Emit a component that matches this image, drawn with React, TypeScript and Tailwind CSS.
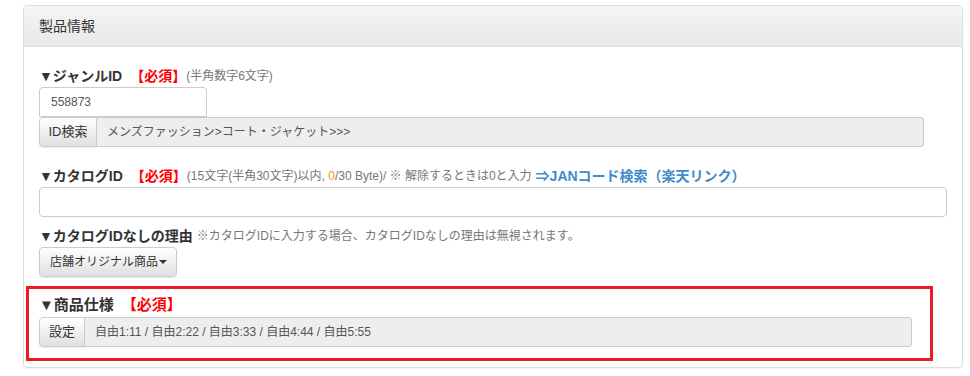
import React from "react";

const font = "font-['Liberation_Sans','Noto_Sans_CJK_JP',sans-serif]";

const Required = () => (
  <span className="text-[#ff0000] font-bold ml-[8px]">【必須】</span>
);

const AddonGroup = ({
  addon,
  value,
  width,
  addonWidth,
}: {
  addon: string;
  value: string;
  width: string;
  addonWidth: string;
}) => (
  <div className={`flex h-[30px] ${width}`}>
    <div
      className={`flex items-center justify-center ${addonWidth} border border-[#ccc] rounded-l-[4px] bg-gradient-to-b from-white to-[#e0e0e0] text-[13px] text-[#333] shadow-[0_1px_1px_rgba(0,0,0,0.08)] whitespace-nowrap`}
    >
      {addon}
    </div>
    <div className="flex-1 flex items-center pl-[10px] border border-l-0 border-[#ccc] rounded-r-[4px] bg-[#eee] text-[12px] text-[#555] whitespace-nowrap">
      {value}
    </div>
  </div>
);

export default function App() {
  return (
    <div className={`w-[970px] h-[376px] bg-white pt-[5px] pl-[23px] ${font}`}>
      <div className="w-[940px] h-[363px] border border-[#ddd] rounded-[4px] shadow-[0_1px_1px_rgba(0,0,0,0.05)] overflow-hidden">
        <div className="h-[41px] flex items-center pl-[15px] border-b border-[#ddd] bg-gradient-to-b from-[#f5f5f5] to-[#e8e8e8] text-[14px] text-[#333]">
          製品情報
        </div>
        <div className="pl-[15px] pt-[19px]">
          {/* ジャンルID */}
          <div className="h-[20px] leading-[20px] text-[14px] text-[#333] flex items-center whitespace-nowrap">
            <span className="font-bold">▼ジャンルID</span>
            <Required />
            <span className="text-[12px] text-[#777]">(半角数字6文字)</span>
          </div>
          <div className="mt-px w-[168px] h-[30px] border border-[#ccc] rounded-t-[4px] flex items-center pl-[11px] text-[12px] text-[#555]">
            558873
          </div>
          <AddonGroup
            addon="ID検索"
            value="メンズファッション>コート・ジャケット>>>"
            width="w-[885px]"
            addonWidth="w-[58px]"
          />

          {/* カタログID */}
          <div className="mt-[19px] h-[20px] leading-[20px] text-[14px] text-[#333] flex items-center whitespace-nowrap">
            <span className="font-bold">▼カタログID</span>
            <Required />
            <span className="text-[12px] text-[#777]">
              (15文字(半角30文字)以内, <span className="text-[#f0a000]">0</span>/30 Byte)/ ※ 解除するときは0と入力
            </span>
            <span className="ml-[4px] text-[#428bca] font-bold">⇒JANコード検索（楽天リンク）</span>
          </div>
          <div className="mt-px w-[908px] h-[30px] border border-[#ccc] rounded-[4px]" />

          {/* カタログIDなしの理由 */}
          <div className="mt-[9px] h-[20px] leading-[20px] text-[14px] text-[#333] flex items-center whitespace-nowrap">
            <span className="font-bold">▼カタログIDなしの理由</span>
            <span className="ml-[4px] text-[12px] text-[#777]">
              ※カタログIDに入力する場合、カタログIDなしの理由は無視されます。
            </span>
          </div>
          <div className="mt-px flex">
            <div className="flex items-center h-[30px] w-[138px] pl-[10px] border border-[#ccc] rounded-[4px] bg-gradient-to-b from-white to-[#e0e0e0] text-[12px] text-[#333] shadow-[0_1px_1px_rgba(0,0,0,0.08)] whitespace-nowrap">
              店舗オリジナル商品
              <span className="ml-[1px] w-0 h-0 border-l-[4px] border-r-[4px] border-t-[4px] border-l-transparent border-r-transparent border-t-[#333]" />
            </div>
          </div>

          {/* 商品仕様 */}
          <div className="mt-[9px] -ml-[13px] w-[907px] border-[3px] border-[#ed1c24] pl-[10px] pt-[6px] pb-[11px]">
            <div className="h-[20px] leading-[20px] text-[15px] text-[#333] flex items-center whitespace-nowrap">
              <span className="font-bold">▼商品仕様</span>
              <Required />
            </div>
            <div className="mt-[2px]">
              <AddonGroup
                addon="設定"
                value="自由1:11 / 自由2:22 / 自由3:33 / 自由4:44 / 自由5:55"
                width="w-[873px]"
                addonWidth="w-[46px]"
              />
            </div>
          </div>
        </div>
      </div>
    </div>
  );
}
